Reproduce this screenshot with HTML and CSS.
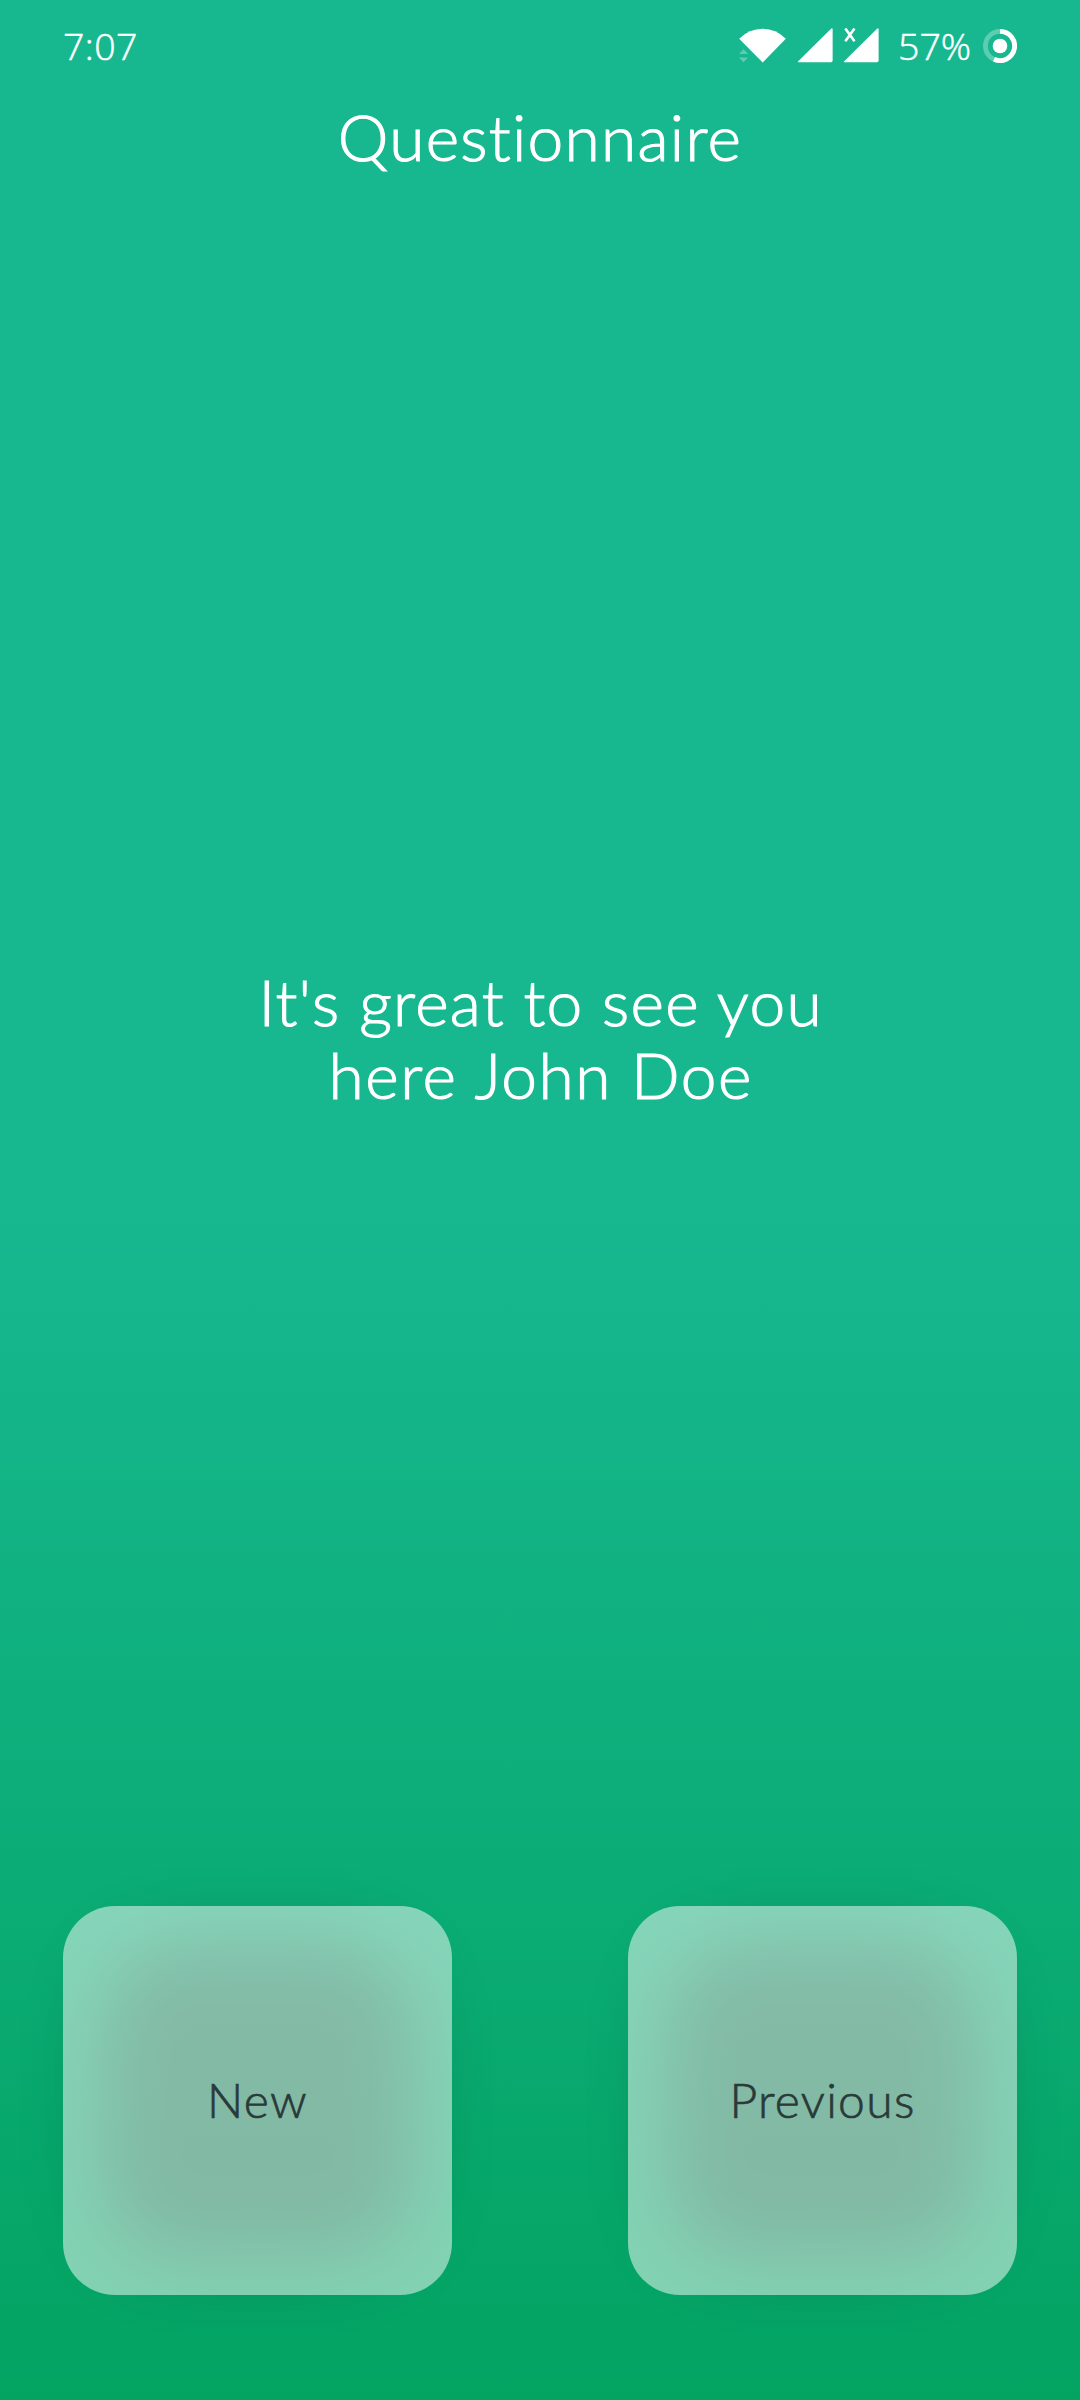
FILE: index.html
```html
<!DOCTYPE html>
<html lang="en">
<head>
<meta charset="utf-8">
<title>Questionnaire</title>
<link rel="stylesheet" href="styles.css">
</head>
<body>
<div class="screen">
  <header class="status-bar">
    <span class="clock">7:07</span>
    <div class="indicators">
      <svg class="icons" width="142" height="40" viewBox="0 0 142 40">
        <path fill="#fff" d="M.2 10.700Q10 .9 23.700 .8Q37 .9 46.800 10.700L23.700 34.500Z"/>
        <path fill="#fff" fill-opacity=".3" d="M0 26 4.500 21.300 9 26zM0 29.500h9L4.500 34.200z"/>
        <path fill="#fff" d="M93.600 1.400V32.500q0 1.700-1.700 1.700H59.500Q58.500 34.200 59.200 33.300L91.800.900Q93.600-.600 93.600 1.400Z"/>
        <path fill="#fff" d="M139.600 1.400V32.500q0 1.700-1.700 1.700H105.500Q104.500 34.200 105.200 33.300L137.800.900Q139.600-.600 139.600 1.400Z"/>
        <path fill="none" stroke="#fff" stroke-width="2.600" d="M106.300.500 115.500 13.200M115.500.500 106.300 13.200"/>
      </svg>
      <span class="battery">57%</span>
      <svg class="ring" width="34" height="34" viewBox="0 0 34 34">
        <circle cx="17" cy="17" r="14.600" fill="none" stroke="#fff" stroke-opacity=".3" stroke-width="4.800"/>
        <path d="M17 2.400A14.600 14.600 0 1 1 11 30.300" fill="none" stroke="#fff" stroke-width="4.800"/>
        <circle cx="17" cy="17" r="7.300" fill="#fff"/>
      </svg>
    </div>
  </header>
  <h1 class="title">Questionnaire</h1>
  <main class="greeting">
    <p class="line line-first">It's great to see you</p>
    <p class="line line-second">here John Doe</p>
  </main>
  <nav class="actions">
    <button class="card"><span class="label">New</span></button>
    <button class="card"><span class="label">Previous</span></button>
  </nav>
</div>
</body>
</html>
```
FILE: styles.css
```css
* { box-sizing: border-box; margin: 0; padding: 0; }
body { background: #03a362; }
.screen {
  width: 1080px;
  height: 2400px;
  overflow: hidden;
  display: flex;
  flex-direction: column;
  background: linear-gradient(#17b890 0, #17b890 50%, #03a362 100%);
  color: #fff;
  font-family: Lato, "Open Sans", sans-serif;
  font-weight: 300;
  font-variant-ligatures: none;
}
.status-bar {
  height: 92px;
  padding: 0 63px;
  display: flex;
  justify-content: space-between;
  align-items: center;
  font-family: "Open Sans", "Noto Sans", sans-serif;
  font-size: 37.5px;
  font-weight: 350;
  line-height: 92px;
  -webkit-text-stroke: .5px currentColor;
}
.clock { letter-spacing: .4px; }
.indicators { display: flex; align-items: center; }
.icons { margin-right: 17px; position: relative; top: 2px; }
.battery { width: 73px; margin-right: 12px; white-space: nowrap; }
.title {
  height: 90px;
  line-height: 90px;
  text-align: center;
  font-size: 64px;
  font-weight: 300;
  letter-spacing: 1.3px;
  -webkit-text-stroke: 1.1px currentColor;
}
.greeting { padding-top: 783px; text-align: center; }
.line {
  height: 73px;
  line-height: 73px;
  font-size: 64px;
  letter-spacing: 1.25px;
  text-indent: 1.25px;
  -webkit-text-stroke: 1.1px currentColor;
}
.line-second { letter-spacing: 1.55px; text-indent: 1.5px; }
.actions {
  margin-top: auto;
  padding: 0 63px 105px;
  display: flex;
  justify-content: space-between;
}
.card {
  position: relative;
  isolation: isolate;
  width: 389px;
  height: 389px;
  padding-bottom: 2px;
  border: 0;
  border-radius: 52px;
  background: none;
  color: #293a38;
  font: 300 48px Lato, "Open Sans", sans-serif;
  letter-spacing: 1.3px;
  -webkit-text-stroke: .7px currentColor;
}
.card::before,
.card::after {
  content: "";
  position: absolute;
  inset: 0;
  z-index: -1;
  border-radius: 52px;
}
/* Soft glow that shows through the translucent surface */
.card::before {
  inset: 38px;
  border-radius: 85px;
  background: rgba(0, 0, 0, .31);
  filter: blur(36px);
}
.card::after { background: rgba(255, 255, 255, .5); }
```
